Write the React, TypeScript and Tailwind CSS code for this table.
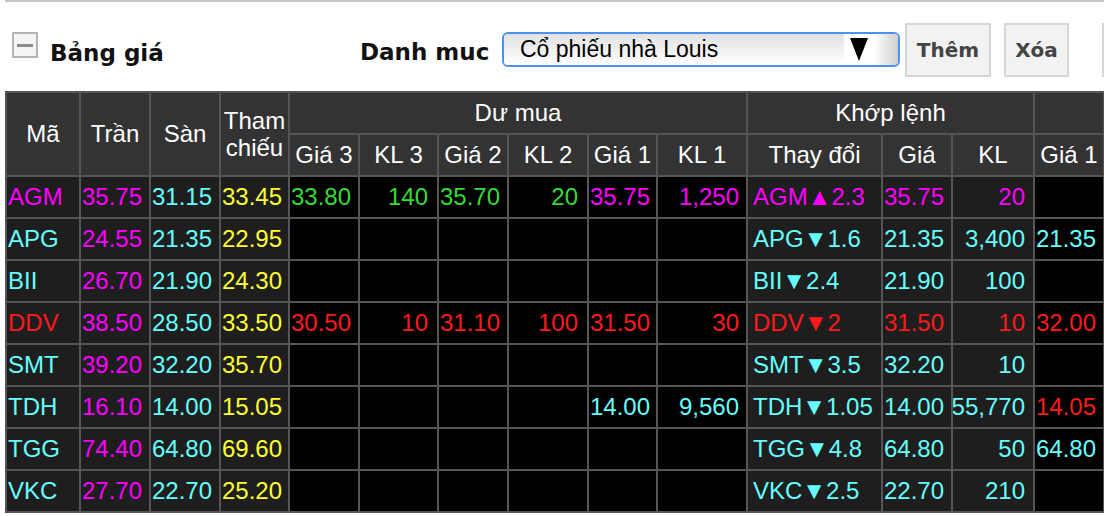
import React from 'react'

type Cell = [string, string] | null

// text colours used by the board
const M = 'text-[#ff00ff]'
const C = 'text-[#66ffff]'
const Y = 'text-[#ffff33]'
const G = 'text-[#33dd33]'
const R = 'text-[#ff1a1a]'

// per-column look of data cells: background + alignment
const cols = [
  'bg-[#1e1e1e] justify-start pl-[1px]', // Mã
  'bg-[#1e1e1e] justify-start pl-[1px]', // Trần
  'bg-[#1e1e1e] justify-start pl-[1px]', // Sàn
  'bg-[#1e1e1e] justify-start pl-[1px]', // Tham chiếu
  'bg-black justify-start pl-[1px]', // Giá 3
  'bg-black justify-end pr-[9px]', // KL 3
  'bg-black justify-start pl-[1px]', // Giá 2
  'bg-black justify-end pr-[9px]', // KL 2
  'bg-black justify-start pl-[1px]', // Giá 1
  'bg-black justify-end pr-[7px]', // KL 1
  'bg-[#1e1e1e] justify-start pl-[5px]', // Thay đổi
  'bg-[#1e1e1e] justify-start pl-[1px]', // Giá
  'bg-[#1e1e1e] justify-end pr-[8px]', // KL
  'bg-black justify-start pl-[1px]', // Giá 1 (bán)
  'bg-black justify-start pl-[1px]', // off screen
]

const rows: Cell[][] = [
  [['AGM', M], ['35.75', M], ['31.15', C], ['33.45', Y], ['33.80', G], ['140', G], ['35.70', G], ['20', G], ['35.75', M], ['1,250', M], ['AGM▲2.3', M], ['35.75', M], ['20', M], null, null],
  [['APG', C], ['24.55', M], ['21.35', C], ['22.95', Y], null, null, null, null, null, null, ['APG▼1.6', C], ['21.35', C], ['3,400', C], ['21.35', C], null],
  [['BII', C], ['26.70', M], ['21.90', C], ['24.30', Y], null, null, null, null, null, null, ['BII▼2.4', C], ['21.90', C], ['100', C], null, null],
  [['DDV', R], ['38.50', M], ['28.50', C], ['33.50', Y], ['30.50', R], ['10', R], ['31.10', R], ['100', R], ['31.50', R], ['30', R], ['DDV▼2', R], ['31.50', R], ['10', R], ['32.00', R], null],
  [['SMT', C], ['39.20', M], ['32.20', C], ['35.70', Y], null, null, null, null, null, null, ['SMT▼3.5', C], ['32.20', C], ['10', C], null, null],
  [['TDH', C], ['16.10', M], ['14.00', C], ['15.05', Y], null, null, null, null, ['14.00', C], ['9,560', C], ['TDH▼1.05', C], ['14.00', C], ['55,770', C], ['14.05', R], null],
  [['TGG', C], ['74.40', M], ['64.80', C], ['69.60', Y], null, null, null, null, null, null, ['TGG▼4.8', C], ['64.80', C], ['50', C], ['64.80', C], null],
  [['VKC', C], ['27.70', M], ['22.70', C], ['25.20', Y], null, null, null, null, null, null, ['VKC▼2.5', C], ['22.70', C], ['210', C], null, null],
]

const head = 'bg-[#333333] text-white flex items-center justify-center'

export default function App() {
  return (
    <div className="w-[1104px] h-[516px] overflow-hidden bg-white font-['Liberation_Sans',Arial,sans-serif]">
      {/* top rule */}
      <div className="ml-[5px] h-[2px] bg-[#c6c6c6]" />

      {/* Toolbar */}
      <div className="h-[89px] flex items-start font-['DejaVu_Sans',Verdana,sans-serif]">
        <div className="w-[360px] shrink-0 flex items-start">
          <div className="ml-[12px] mt-[30px] w-[26px] h-[26px] border-2 border-[#b4b4b4] bg-[#f4f4f4] flex items-center justify-center">
            <div className="w-[16px] h-[3px] bg-[#8c8c8c]" />
          </div>
          <h1 className="ml-[12px] mt-[37px] text-[23px] leading-[28px] font-bold text-[#111]">Bảng giá</h1>
        </div>
        <div className="w-[142px] shrink-0 mt-[36px] text-[23px] leading-[28px] font-bold text-[#111]">Danh muc</div>

        <div className="mt-[30px] w-[398px] h-[35px] shrink-0 rounded-[6px] border-2 border-[#4d90f0] overflow-hidden flex items-stretch font-['Liberation_Sans',Arial,sans-serif]">
          <div className="flex-1 bg-gradient-to-b from-[#e2e2e2] to-white flex items-center pl-[16px] text-[23px] text-black">
            Cổ phiếu nhà Louis
          </div>
          <div className="w-[30px] bg-white flex items-center justify-center">
            <svg width="18" height="23" viewBox="0 0 18 23">
              <polygon points="0,0 18,0 9,23" fill="#000" />
            </svg>
          </div>
          <div className="w-[24px] bg-gradient-to-r from-white to-[#cfcfcf]" />
        </div>

        <button className="ml-[5px] mt-[21px] w-[86px] h-[54px] shrink-0 border-2 border-[#d6d6d6] bg-[#f2f2f2] text-[20px] font-bold text-[#444]">
          Thêm
        </button>
        <button className="ml-[13px] mt-[21px] w-[65px] h-[54px] shrink-0 border-2 border-[#d6d6d6] bg-[#f2f2f2] text-[20px] font-bold text-[#444]">
          Xóa
        </button>
        <button className="ml-[33px] mt-[21px] w-[60px] h-[54px] shrink-0 border-2 border-[#d6d6d6] bg-[#f2f2f2]" />
      </div>

      {/* Price board */}
      <div className="ml-[5px] grid w-max gap-[2px] p-[2px] bg-[#555555] grid-cols-[72px_68px_68px_67px_68px_77px_68px_78px_67px_88px_133px_68px_80px_68px_80px] auto-rows-[40px] text-[24px] leading-[28px]">
        <div className={`${head} row-span-2`}>Mã</div>
        <div className={`${head} row-span-2`}>Trần</div>
        <div className={`${head} row-span-2`}>Sàn</div>
        <div className={`${head} row-span-2 flex-col leading-[27px]`}>
          <span>Tham</span>
          <span>chiếu</span>
        </div>
        <div className={`${head} col-span-6`}>Dư mua</div>
        <div className={`${head} col-span-3`}>Khớp lệnh</div>
        <div className={head} />
        <div className={head} />

        {['Giá 3', 'KL 3', 'Giá 2', 'KL 2', 'Giá 1', 'KL 1', 'Thay đổi', 'Giá', 'KL', 'Giá 1', ''].map((t, i) => (
          <div key={i} className={head}>{t}</div>
        ))}

        {rows.map((row, r) =>
          row.map((cell, c) => (
            <div key={`${r}-${c}`} className={`flex items-center whitespace-nowrap overflow-hidden ${cols[c]} ${cell ? cell[1] : ''}`}>
              {cell ? cell[0] : ''}
            </div>
          ))
        )}
      </div>
    </div>
  )
}
